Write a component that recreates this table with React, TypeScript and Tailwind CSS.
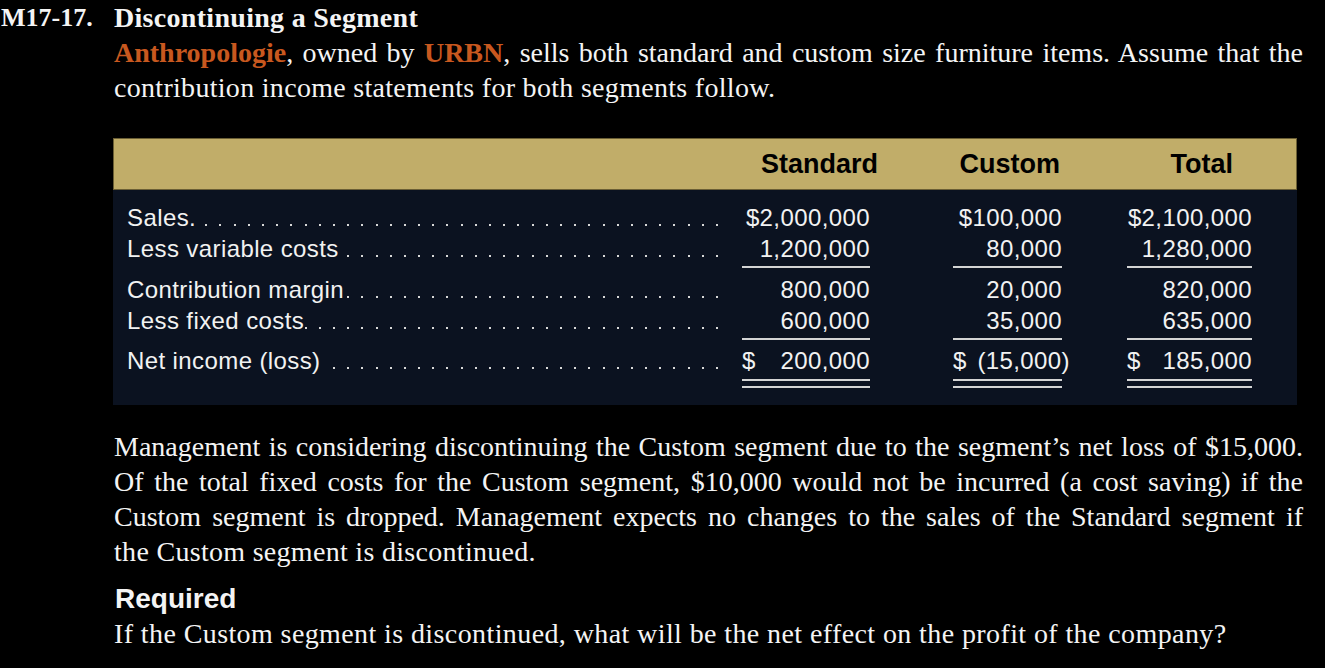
const serif = "font-['Liberation_Serif','Times_New_Roman',serif]";
const sans = "font-['Liberation_Sans',Arial,sans-serif]";

type Cell = { text: string; dollar?: boolean; paren?: boolean };

type Row = {
  label: string;
  cells: Cell[];
  line?: "single" | "double";
  gap?: string;
};

const rows: Row[] = [
  {
    label: "Sales.",
    cells: [{ text: "$2,000,000" }, { text: "$100,000" }, { text: "$2,100,000" }],
  },
  {
    label: "Less variable costs",
    cells: [{ text: "1,200,000" }, { text: "80,000" }, { text: "1,280,000" }],
    line: "single",
  },
  {
    label: "Contribution margin",
    cells: [{ text: "800,000" }, { text: "20,000" }, { text: "820,000" }],
    gap: "mt-[6px]",
  },
  {
    label: "Less fixed costs",
    cells: [{ text: "600,000" }, { text: "35,000" }, { text: "635,000" }],
    line: "single",
  },
  {
    label: "Net income (loss)",
    cells: [
      { text: "200,000", dollar: true },
      { text: "(15,000", dollar: true, paren: true },
      { text: "185,000", dollar: true },
    ],
    line: "double",
    gap: "mt-[5px]",
  },
];

// column widths & underline widths
const cols = [
  { w: "w-[140px]", line: "w-[128px]" },
  { w: "w-[192px]", line: "w-[109px]" },
  { w: "w-[190px]", line: "w-[125px]" },
];

function Leader() {
  return (
    <div className="flex-1 flex justify-end items-end overflow-hidden h-full pb-[7px] pl-[14px] pr-[12px]">
      {Array.from({ length: 60 }).map((_, i) => (
        <span key={i} className="shrink-0 w-[2px] h-[2px] bg-[#d8d8d8] ml-[12.2px]" />
      ))}
    </div>
  );
}

function NumberCell({ cell, col, line }: { cell: Cell; col: (typeof cols)[number]; line?: Row["line"] }) {
  return (
    <div className={`${col.w} shrink-0 flex justify-end`}>
      <div className={`${col.line} flex flex-col`}>
        <div className="h-[31px] leading-[31px] flex justify-between whitespace-nowrap">
          {cell.dollar ? <span>$</span> : <span />}
          <span>
            {cell.text}
            {cell.paren && <span className="-mr-[8px]">)</span>}
          </span>
        </div>
        {line === "single" && <div className="h-[2px] mt-[2px] bg-[#d4d4d4]" />}
        {line === "double" && (
          <div className="mt-[3px] flex flex-col gap-[5px]">
            <div className="h-[2px] bg-[#d4d4d4]" />
            <div className="h-[2px] bg-[#d4d4d4]" />
          </div>
        )}
      </div>
    </div>
  );
}

function StatementTable() {
  return (
    <div className={`ml-[113px] w-[1184px] mt-[33px] bg-[#0b1220] ${sans}`}>
      <div className="h-[52px] bg-[#c1ad69] border border-[#6b5f35] flex items-center pl-[14px] pr-[63px] text-black font-bold text-[27px]">
        <div className="flex-1" />
        <div className="w-[140px] text-right">Standard</div>
        <div className="w-[182px] text-right">Custom</div>
        <div className="w-[173px] text-right">Total</div>
      </div>
      <div className="pt-[12px] pb-[17px] pl-[14px] pr-[45px] text-[#f2f2f2] text-[24px] tracking-[0.4px]">
        {rows.map((r) => (
          <div key={r.label} className={`flex items-start ${r.gap ?? ""}`}>
            <div className="flex-1 flex h-[31px] leading-[31px] min-w-0">
              <span className="whitespace-nowrap">{r.label}</span>
              <Leader />
            </div>
            {r.cells.map((c, i) => (
              <NumberCell key={i} cell={c} col={cols[i]} line={r.line} />
            ))}
          </div>
        ))}
      </div>
    </div>
  );
}

// one justified line of running text, or a ragged last line
function Line({ children, last }: { children: React.ReactNode; last?: boolean }) {
  return (
    <div className={`whitespace-nowrap ${last ? "tracking-[0.3px]" : "text-justify [text-align-last:justify]"}`}>
      {children}
    </div>
  );
}

export default function App() {
  return (
    <div className={`w-[1325px] h-[668px] bg-black text-[#f4f4f4] overflow-hidden ${serif}`}>
      <div className="flex h-[35px] leading-[35px] font-bold">
        <div className="w-[114px] shrink-0 pl-[1px] text-[26px]">M17-17.</div>
        <div className="text-[28px] tracking-[0.3px]">Discontinuing a Segment</div>
      </div>
      <div className="ml-[114px] w-[1189px] text-[28px] leading-[35px]">
        <Line>
          <span className="font-bold text-[#c8581f]">Anthropologie</span>, owned by{" "}
          <span className="font-bold text-[#c8581f]">URBN</span>, sells both standard and custom size furniture
          items. Assume that the
        </Line>
        <Line last>contribution income statements for both segments follow.</Line>
      </div>

      <StatementTable />

      <div className="ml-[114px] w-[1189px] mt-[24px] text-[28px] leading-[35px]">
        <Line>Management is considering discontinuing the Custom segment due to the segment’s net loss of $15,000.</Line>
        <Line>Of the total fixed costs for the Custom segment, $10,000 would not be incurred (a cost saving) if the</Line>
        <Line>Custom segment is dropped. Management expects no changes to the sales of the Standard segment if</Line>
        <Line last>the Custom segment is discontinued.</Line>
      </div>
      <h3 className={`ml-[115px] mt-[14px] h-[32px] leading-[32px] text-[28px] font-bold ${sans}`}>Required</h3>
      <div className="ml-[114px] mt-[1px] text-[28px] leading-[35px] tracking-[0.4px]">
        If the Custom segment is discontinued, what will be the net effect on the profit of the company?
      </div>
    </div>
  );
}
